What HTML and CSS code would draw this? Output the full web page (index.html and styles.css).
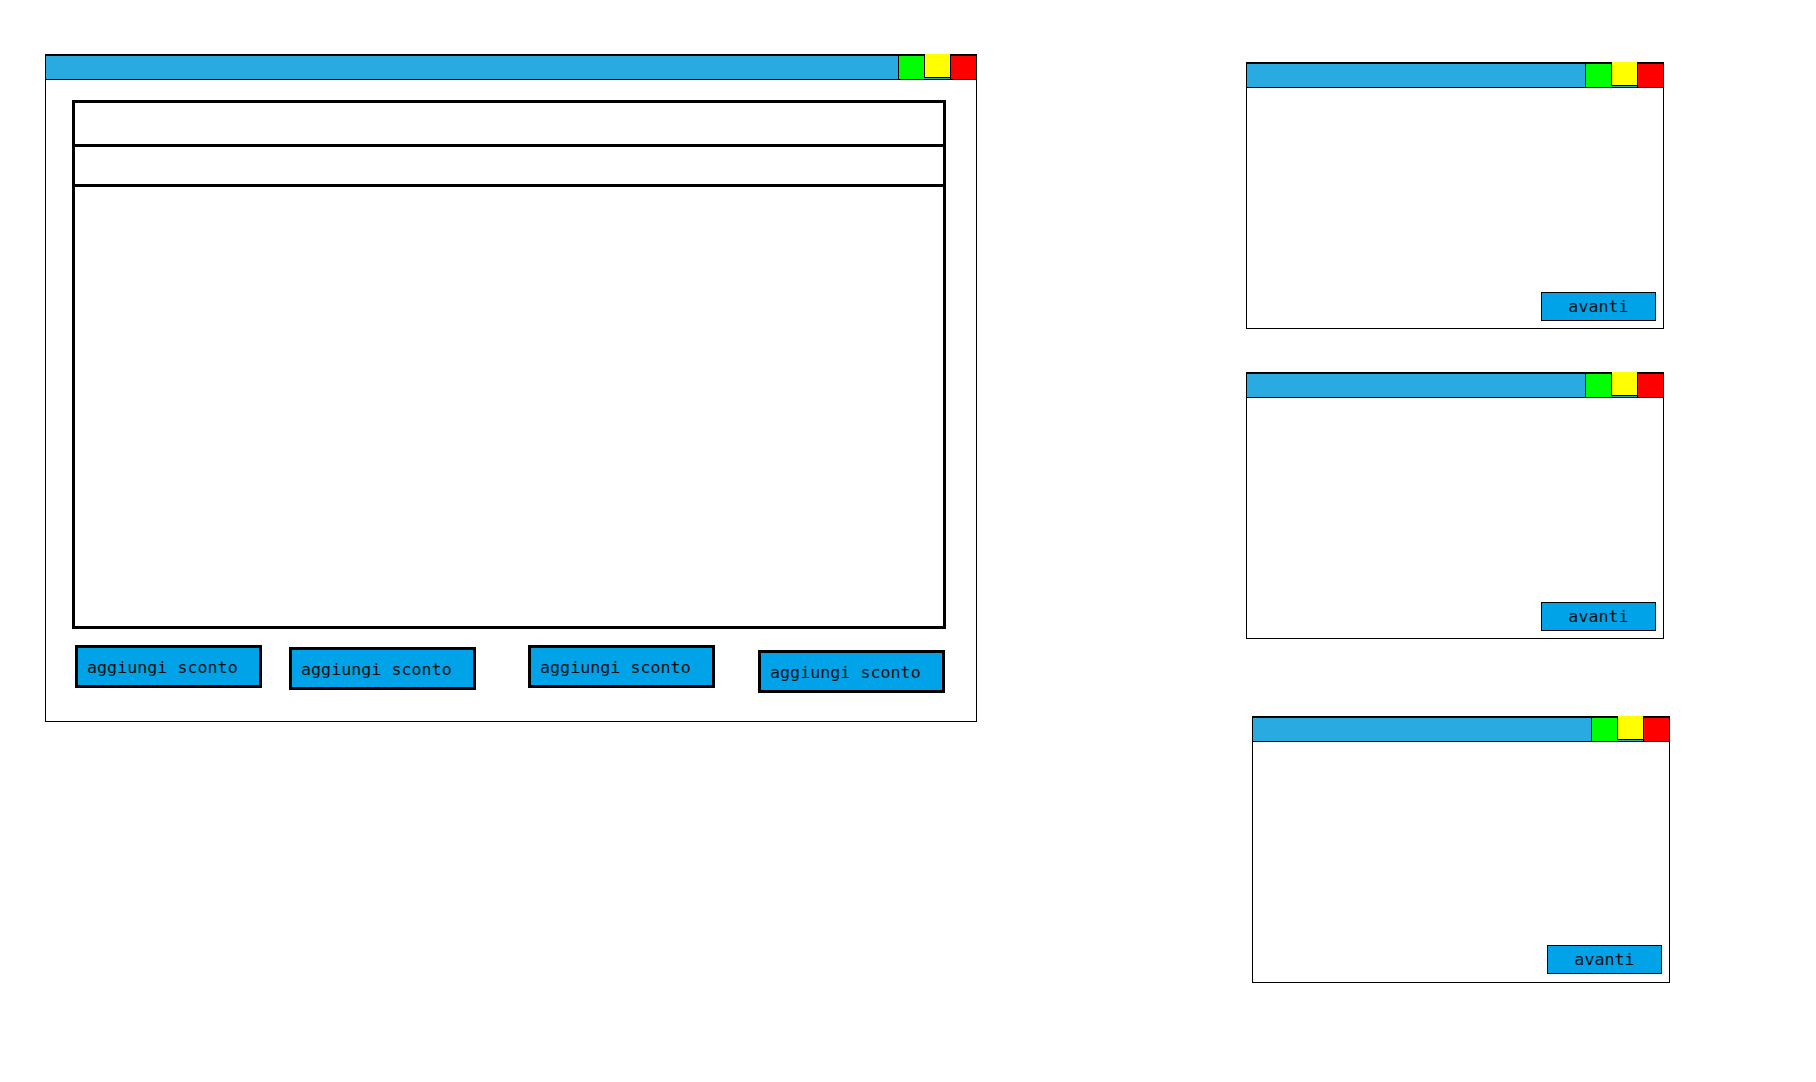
FILE: index.html
```html
<!DOCTYPE html>
<html lang="it">
<head>
<meta charset="utf-8">
<title>Mockup</title>
<link rel="stylesheet" href="styles.css">
</head>
<body>
<div class="desktop">
  <section class="window window-main">
    <header class="titlebar">
      <span class="ctl ctl-green"></span>
      <span class="ctl ctl-yellow"></span>
      <span class="ctl ctl-red"></span>
    </header>
    <div class="main-body">
      <div class="panel">
        <div class="panel-row panel-row-1"></div>
        <div class="panel-row panel-row-2"></div>
        <div class="panel-row panel-row-3"></div>
      </div>
      <div class="btn-row">
        <button class="btn-sconto b1">aggiungi sconto</button>
        <button class="btn-sconto b2">aggiungi sconto</button>
        <button class="btn-sconto b3">aggiungi sconto</button>
        <button class="btn-sconto b4">aggiungi sconto</button>
      </div>
    </div>
  </section>

  <section class="window window-small win-a">
    <header class="titlebar">
      <span class="ctl ctl-green"></span>
      <span class="ctl ctl-yellow"></span>
      <span class="ctl ctl-red"></span>
    </header>
    <div class="small-body"><button class="btn-avanti">avanti</button></div>
  </section>

  <section class="window window-small win-b">
    <header class="titlebar">
      <span class="ctl ctl-green"></span>
      <span class="ctl ctl-yellow"></span>
      <span class="ctl ctl-red"></span>
    </header>
    <div class="small-body"><button class="btn-avanti">avanti</button></div>
  </section>

  <section class="window window-small win-c">
    <header class="titlebar">
      <span class="ctl ctl-green"></span>
      <span class="ctl ctl-yellow"></span>
      <span class="ctl ctl-red"></span>
    </header>
    <div class="small-body body-c"><button class="btn-avanti">avanti</button></div>
  </section>
</div>
</body>
</html>
```
FILE: styles.css
```css
* { box-sizing: border-box; }

html, body {
  margin: 0;
  padding: 0;
  background: #ffffff;
}

body {
  font-family: "DejaVu Sans Mono", "Liberation Mono", monospace;
  color: #111;
}

.desktop {
  position: relative;
  width: 1816px;
  height: 1082px;
}

.window {
  position: absolute;
  display: flex;
  flex-direction: column;
  background: #fff;
  border: 1px solid #000;
  border-top-width: 2px;
}

.window-main { left: 45px; top: 54px; width: 932px; height: 668px; }
.window-small { width: 418px; height: 267px; }
.win-a { left: 1246px; top: 62px; }
.win-b { left: 1246px; top: 372px; }
.win-c { left: 1252px; top: 716px; }

.titlebar {
  display: flex;
  justify-content: flex-end;
  height: 24px;
  flex: none;
  background: #29abe2;
  border-bottom: 1px solid #000;
}

.ctl {
  width: 26px;
  height: 23px;
  border-left: 1px solid #000;
}
.ctl-green { background: #00ff00; }
.ctl-yellow {
  background: #ffff00;
  margin-top: -2px;
  height: 24px;
  border-bottom: 1px solid #000;
}
.ctl-red { background: #ff0000; }

.main-body {
  display: flex;
  flex-direction: column;
  padding: 20px 30px 0 26px;
}

.panel {
  display: flex;
  flex-direction: column;
  width: 874px;
  height: 529px;
  border: 3px solid #000;
}
.panel-row-1 { height: 44px; border-bottom: 3px solid #000; }
.panel-row-2 { height: 40px; border-bottom: 3px solid #000; }
.panel-row-3 { flex: 1; }

.btn-row {
  display: flex;
  align-items: flex-start;
  padding: 16px 0 0 3px;
}

.btn-sconto {
  width: 187px;
  height: 43px;
  margin: 0;
  padding: 0 0 0 9px;
  text-align: left;
  background: #00a2e8;
  border: 3px solid #000;
  font-family: "DejaVu Sans Mono", "Liberation Mono", monospace;
  font-size: 16.7px;
  color: #111;
}
.b2 { margin-left: 27px; margin-top: 2px; }
.b3 { margin-left: 52px; }
.b4 { margin-left: 43px; margin-top: 5px; }

.small-body {
  flex: 1;
  display: flex;
  justify-content: flex-end;
  align-items: flex-end;
  padding: 0 7px 7px 0;
}
.body-c { padding-bottom: 8px; }

.btn-avanti {
  width: 115px;
  height: 29px;
  margin: 0;
  padding: 0 0 1px;
  background: #00a2e8;
  border: 1px solid #000;
  font-family: "DejaVu Sans Mono", "Liberation Mono", monospace;
  font-size: 16.7px;
  color: #111;
  text-align: center;
}
```
